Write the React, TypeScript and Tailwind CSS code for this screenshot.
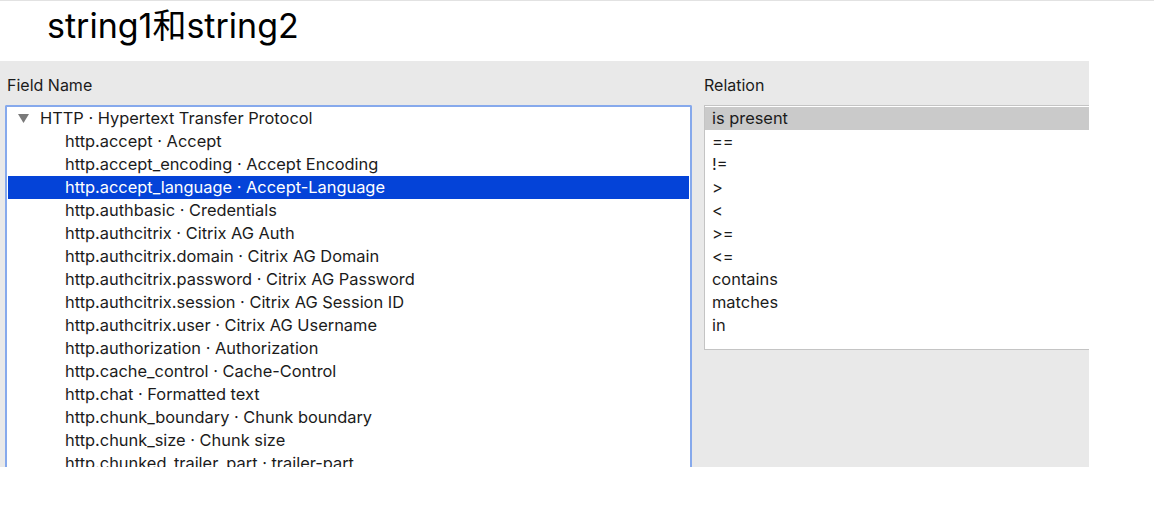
import React from "react";

const fields = [
  "http.accept · Accept",
  "http.accept_encoding · Accept Encoding",
  "http.accept_language · Accept-Language",
  "http.authbasic · Credentials",
  "http.authcitrix · Citrix AG Auth",
  "http.authcitrix.domain · Citrix AG Domain",
  "http.authcitrix.password · Citrix AG Password",
  "http.authcitrix.session · Citrix AG Session ID",
  "http.authcitrix.user · Citrix AG Username",
  "http.authorization · Authorization",
  "http.cache_control · Cache-Control",
  "http.chat · Formatted text",
  "http.chunk_boundary · Chunk boundary",
  "http.chunk_size · Chunk size",
  "http.chunked_trailer_part · trailer-part",
];

const relations = ["is present", "==", "!=", ">", "<", ">=", "<=", "contains", "matches", "in"];

export default function App() {
  return (
    <div
      className="w-[1154px] h-[507px] bg-white overflow-hidden border-t border-[#e2e2e2] text-[#1b1b1b]"
      style={{ fontFamily: "Inter, 'Noto Sans CJK SC', sans-serif" }}
    >
      <div className="h-[60px] pl-[47px] pt-[3px] text-[34px] leading-[44px] text-black">
        string1和string2
      </div>
      <div className="w-[1089px] h-[406px] bg-[#e9e9e9] flex overflow-hidden">
        <div className="w-[704px] shrink-0 pl-[5px] pr-[12px] pt-[14px] flex flex-col">
          <div className="pl-[2px] text-[16px] leading-[20px] mb-[10px]">Field Name</div>
          <div className="flex-1 bg-white border-2 border-b-0 border-[#86a9ec] rounded-t-[2px] px-px">
            <div className="h-[23px] flex items-center text-[16.4px]">
              <svg width="11" height="9" viewBox="0 0 11 9" className="ml-[10px] mr-[11px]">
                <path d="M0 0 L11 0 L5.5 9 Z" fill="#7a7a7a" />
              </svg>
              <span>HTTP · Hypertext Transfer Protocol</span>
            </div>
            {fields.map((f, i) => (
              <div
                key={f}
                className={
                  "h-[23px] flex items-center pl-[57px] text-[16.4px] whitespace-nowrap " +
                  (i === 2 ? "bg-[#0443d8] text-white" : "")
                }
              >
                {f}
              </div>
            ))}
          </div>
        </div>
        <div className="flex-1 pt-[14px] flex flex-col">
          <div className="text-[16px] leading-[20px] mb-[10px]">Relation</div>
          <div className="w-[420px] h-[245px] bg-white border border-[#c4c4c4] pt-px">
            {relations.map((r, i) => (
              <div
                key={r}
                className={
                  "h-[23px] flex items-center pl-[7px] text-[16.4px] " +
                  (i === 0 ? "bg-[#cacaca]" : "")
                }
              >
                {r}
              </div>
            ))}
          </div>
        </div>
      </div>
    </div>
  );
}
